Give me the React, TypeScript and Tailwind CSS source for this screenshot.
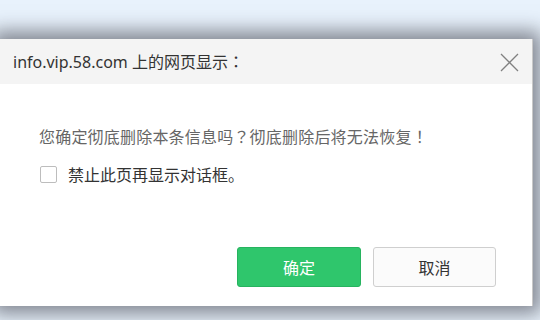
import React from "react";

export default function App() {
  const font = { fontFamily: '"Noto Sans", "Noto Sans CJK SC", sans-serif' };
  const cjk = { fontFamily: '"Noto Sans CJK SC", "Noto Sans", sans-serif' };
  const cjkTc = { fontFamily: '"Noto Sans CJK TC", "Noto Sans CJK SC", sans-serif' };
  return (
    <div
      className="w-[540px] h-[320px] overflow-hidden bg-[#e8f2fc] pt-[39px]"
      style={font}
    >
      <div className="w-[533px] h-[267px] bg-white flex flex-col shadow-[0_0_18px_8px_rgba(50,50,60,0.55)] border-r border-[#c8c8c8]">
        <div className="h-[45px] bg-[#f4f4f4] flex items-center justify-between pl-[13px] pr-[13px]">
          <span className="text-[16px] text-[#333] leading-none">
            info.vip.58.com <span style={cjk}>上的网页显示</span><span style={cjkTc}>：</span>
          </span>
          <svg width="19" height="19" viewBox="0 0 19 19" className="mt-[1px]">
            <path d="M1 1 L18 18 M18 1 L1 18" stroke="#808080" strokeWidth="1.3" fill="none" />
          </svg>
        </div>
        <div className="flex-1 flex flex-col pl-[39px]" style={cjk}>
          <p className="mt-[42px] text-[16px] leading-[20px] text-[#666] tracking-[0.2px]">
            您确定彻底删除本条信息吗<span style={cjkTc}>？</span>彻底删除后将无法恢复<span style={cjkTc}>！</span>
          </p>
          <label className="mt-[18px] flex items-center gap-[11px] pl-[1px]">
            <span className="w-[17px] h-[17px] border border-[#bdbdbd] rounded-[2px] bg-white" />
            <span className="text-[16px] leading-[20px] text-[#333]">禁止此页再显示对话框。</span>
          </label>
          <div className="mt-auto mb-[19px] flex justify-end gap-[12px] pr-[36px]">
            <button className="w-[124px] h-[40px] rounded-[3px] bg-[#2fc66c] border border-[#27b35f] text-white text-[16px]">
              确定
            </button>
            <button className="w-[123px] h-[40px] rounded-[3px] bg-[#fbfbfb] border border-[#cfcfcf] text-[#333] text-[16px]">
              取消
            </button>
          </div>
        </div>
      </div>
    </div>
  );
}
